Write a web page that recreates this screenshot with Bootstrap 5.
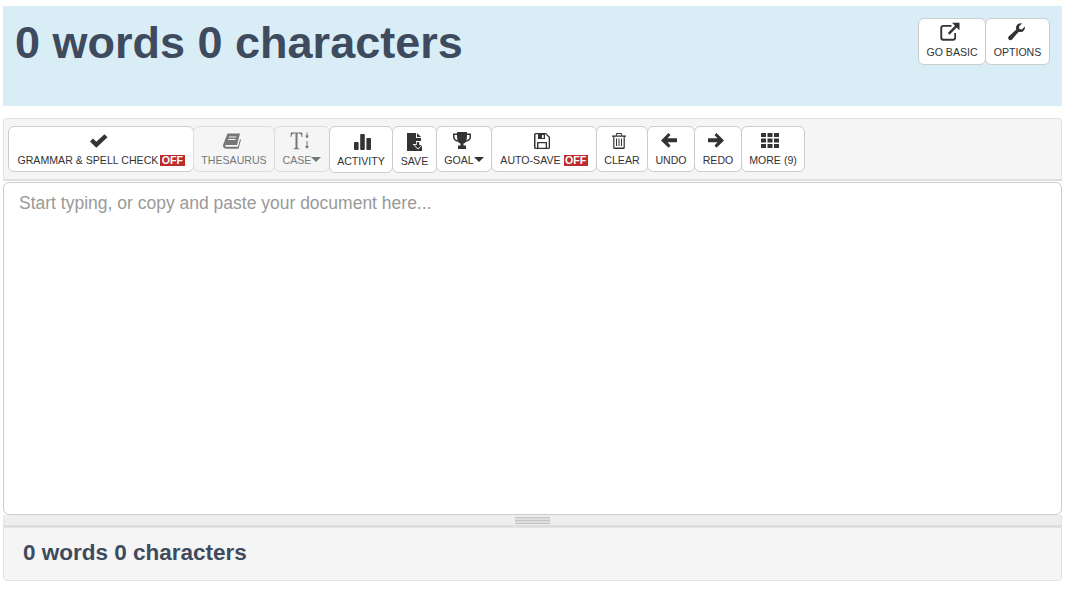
<!DOCTYPE html>
<html lang="en"><head><meta charset="utf-8"><title>Word counter</title>
<link href="https://cdn.jsdelivr.net/npm/bootstrap@5.3.0/dist/css/bootstrap.min.css" rel="stylesheet">
<style>
html,body{height:589px;overflow:hidden;background:#fff;font-family:"Liberation Sans",Arial,sans-serif}
.page-wrap{width:1059px;margin-left:3px;padding-top:6px}
.head-box{height:100px;background:#d9edf7;padding:13px 12px 0 12px}
.head-btns{margin-top:-1px}
.big-count{font-size:45px;line-height:48px;font-weight:700;color:#3e4a5d;margin:0}
.tool-bar{margin-top:12px;height:63px;background:#f5f5f5;border:1px solid #e3e3e3;border-bottom:2px solid #ddd;border-radius:4px 4px 0 0;padding:7px 0 0 4px;align-items:flex-start}
.tb{display:flex;flex-direction:column;align-items:center;justify-content:flex-start;flex:none;height:46px;padding:3px 0 0;background:#fff;border:1px solid #ccc;border-radius:6px;color:#333;font-size:10.6px;line-height:12px;white-space:nowrap;margin-right:-1px}
.tb:hover{background:#fff;color:#333;border-color:#ccc}
.tb .ic{height:24px;padding-bottom:3px;display:flex;align-items:center;justify-content:center}
.tb svg{display:block;fill:#333}
.tb-off{background:#f5f5f5;color:#777;border-color:#ddd}
.tb-off:hover{background:#f5f5f5;color:#777;border-color:#ddd}
.tb-off svg{fill:#777}
.tb-tall{height:47px}
.tb-tall .ic{height:25px;padding-bottom:2px}
.off-tag{display:inline-block;background:#bd2c2c;color:#fff;font-weight:700;padding:0 1.5px;line-height:11px;margin-left:2px;font-size:10.6px}
.caret-d{display:inline-block;width:0;height:0;border-left:5px solid transparent;border-right:5px solid transparent;border-top:5px solid currentColor;vertical-align:2px}
.tw-gram{width:186px}.tw-gram .ic{margin-right:5px}.tw-thes{width:82px}.tw-thes .ic{margin-right:4px}.tw-case{width:56px}.tw-case .ic{margin-right:5px}.tw-act{width:64px}.tw-act .ic{margin-left:2px}.tw-save{width:45px}.tw-goal{width:56px}.tw-goal .ic{margin-right:4px}.tw-autos{width:106px}.tw-autos .ic{margin-right:5px}.tw-clear{width:52px}.tw-clear .ic{margin-right:6px}.tw-undo{width:48px}.tw-undo .ic{margin-right:4px}.tw-redo{width:48px}.tw-redo .ic{margin-right:4px}.tw-more{width:64px}.tw-more .ic{margin-right:6px}.tw-basic{width:68px}.tw-basic .ic{margin-right:4px}.tw-opts{width:65px}.tw-opts .ic{margin-right:4px}
.head-btns .tb{height:47px;padding-top:3px}
.head-btns .ic{height:24px;padding-bottom:5px}
.editor-box{display:block;width:100%;height:333px;border:1px solid #ccc;border-radius:6px;padding:9px 15px;resize:none;outline:0;font-size:17.5px;line-height:22px;background:#fff;color:#333;margin-top:1px}
.editor-box::placeholder{color:#999;opacity:1}
.grip-bar{height:12px;background:#eee;border:1px solid #e3e3e3;border-top:0;border-bottom:2px solid #ddd;display:flex;align-items:center;justify-content:center}
.grip-lines{width:35px;height:7px;border-top:1px solid #c4c4c4;border-bottom:1px solid #c4c4c4;background:linear-gradient(#ddd 0 40%,#c4c4c4 40% 60%,#ddd 60%)}
.foot-box{height:54px;background:#f5f5f5;border:1px solid #e3e3e3;border-radius:0 0 4px 4px;padding:0 19px 2px;display:flex;align-items:center}
.small-count{font-size:22.5px;line-height:26px;font-weight:700;color:#3e4a5d;margin:0}
</style></head><body>
<div class="page-wrap">
 <div class="head-box d-flex justify-content-between align-items-start">
  <h1 class="big-count">0 words 0 characters</h1>
  <div class="head-btns d-flex">
   <button class="btn tb tw-basic"><span class="ic"><svg width="20" height="20" viewBox="0 0 20 20"><path d="M3.500 3h8v1.700h-8A1.300 1.300 0 0 0 2.200 6v9.500a1.300 1.300 0 0 0 1.300 1.300H13a1.300 1.300 0 0 0 1.300-1.300V11H16v4.700a3 3 0 0 1-3 3H3.300a3 3 0 0 1-3-3V6a3 3 0 0 1 3-3z"/><path d="M12 .8h7.500v7.500l-2.800-2.800-7.200 7.200-1.700-1.700 7.200-7.200z"/></svg></span>GO BASIC</button>
   <button class="btn tb tw-opts" style="margin-right:0"><span class="ic"><svg width="20" height="20" viewBox="0 0 20 20"><path d="M18.800 4.500c.4 2.300-.5 4.300-2.500 5.200-1.200.5-2.400.5-3.500 0L6 17.500c-.9 1-2.300 1-3.200.1-.9-.9-.9-2.400.1-3.300l7.400-6.900c-.5-1.200-.4-2.600.4-3.800C11.800 1.800 13.800 1 16 1.500l-3 3 .4 2.500 2.400.5z"/></svg></span>OPTIONS</button>
  </div>
 </div>

 <div class="tool-bar d-flex">
  <button class="btn tb tw-gram"><span class="ic"><svg width="18" height="14" viewBox="0 0 18 14"><path d="M0 7.500 3 4.500l3.300 3.300L14.500.2 17.500 3.200 6.300 13.800z"/></svg></span><span>GRAMMAR &amp; SPELL CHECK<span class="off-tag">OFF</span></span></button>
  <button class="btn tb tb-off tw-thes"><span class="ic"><svg width="18" height="16" viewBox="0 0 18 16"><path d="M4.500.5H17l-3 11.500H3.500c-1 0-1.500.6-1.200 1.200.2.400.7.600 1.200.6H15l2-7.500 1 .5-2.500 9H3.500C1.500 15.800 0 14.500 0 12.800c0-.5.100-1 .3-1.500zM6 3.500l-.3 1h7.500l.3-1zM5.300 6l-.3 1h7.500l.3-1z"/></svg></span>THESAURUS</button>
  <button class="btn tb tb-off tw-case"><span class="ic"><svg width="20" height="20" viewBox="0 0 20 20"><path d="M.8 1.500h11.500l.2 4.500h-.8c-.4-2.300-1-3.400-3.300-3.400H7.500v13.600c0 .9.400 1.100 1.800 1.200v.8H3.700v-.8c1.400-.1 1.800-.3 1.800-1.200V2.600H4.600C2.300 2.600 1.700 3.700 1.300 6H.5z"/><path d="M16.500 1.500h1v3h1.500l-2 3-2-3h1.500zM16.500 10h1v5h1.500l-2 3-2-3h1.500z"/></svg></span><span>CASE<span class="caret-d"></span></span></button>
  <button class="btn tb tb-tall tw-act"><span class="ic"><svg width="17" height="16" viewBox="0 0 17 16"><rect x="0" y="8" width="4.600" height="8" rx="1"/><rect x="6.200" y="0" width="4.600" height="16" rx="1"/><rect x="12.400" y="4" width="4.600" height="12" rx="1"/></svg></span>ACTIVITY</button>
  <button class="btn tb tb-tall tw-save"><span class="ic"><svg width="15" height="18" viewBox="0 0 15 18"><path d="M0 0h9v5h5v3H9v3H5.500l5.500 5.500L15 12.500V18H0z"/><path d="M10 0l4 4h-4z"/><path d="M9.800 9h2.400v3h2.300l-3.500 3.500L7.500 12h2.300z"/></svg></span>SAVE</button>
  <button class="btn tb tw-goal"><span class="ic"><svg width="18" height="17" viewBox="0 0 18 17"><path d="M4 0h10v1.500h4V5c0 2.500-2 4.400-5 4.800-.7.900-1.500 1.500-2.500 1.800v2h2.500V17H5v-3.400h2.500v-2c-1-.3-1.800-.9-2.500-1.800C2 9.400 0 7.500 0 5V1.500h4zM1.500 3v2c0 1.500 1.100 2.700 3 3.200C4.200 6.600 4 4.800 4 3zM14 3c0 1.800-.2 3.600-.5 5.200 1.900-.5 3-1.700 3-3.200V3z"/></svg></span><span>GOAL<span class="caret-d"></span></span></button>
  <button class="btn tb tw-autos"><span class="ic"><svg width="16" height="16" viewBox="0 0 16 16"><path fill-rule="evenodd" d="M1.500 0H12l4 4v10.500a1.500 1.500 0 0 1-1.500 1.500h-13A1.500 1.500 0 0 1 0 14.500v-13A1.500 1.500 0 0 1 1.500 0zM1.500 1.300v13.400H3V9h10v5.700h1.700V4.600L11.500 1.300H11V6H4V1.300zM4.400 10.300v4.400h7.300v-4.400zM8 2v3h1.700V2z"/></svg></span><span>AUTO-SAVE <span class="off-tag" style="margin-left:0">OFF</span></span></button>
  <button class="btn tb tw-clear"><span class="ic"><svg width="14" height="16" viewBox="0 0 14 16"><path fill-rule="evenodd" d="M4.500 0h5l1 2.500H14v1.200h-1.200v10.800A1.500 1.500 0 0 1 11.300 16H2.700a1.500 1.500 0 0 1-1.500-1.500V3.700H0V2.500h3.500zM5.100 1.100l-.4 1.400h4.600l-.4-1.400zM2.400 3.700v10.800h9.200V3.700zM4 5.500h1v7.500H4zM6.500 5.500h1v7.500h-1zM9 5.500h1v7.500H9z"/></svg></span>CLEAR</button>
  <button class="btn tb tw-undo"><span class="ic"><svg width="16" height="15" viewBox="0 0 16 15"><path d="M7.500 0 9.500 2 6.500 5.300H16v4H6.500L9.500 12.600 7.500 14.800 0 7.400z"/></svg></span>UNDO</button>
  <button class="btn tb tw-redo"><span class="ic"><svg width="16" height="15" viewBox="0 0 16 15"><path d="M8.500 0 6.500 2 9.500 5.300H0v4H9.500L6.500 12.600 8.500 14.800 16 7.400z"/></svg></span>REDO</button>
  <button class="btn tb tw-more"><span class="ic"><svg width="18" height="15" viewBox="0 0 18 15"><path d="M0 0h5v4H0zM6.500 0h5v4h-5zM13 0h5v4h-5zM0 5.500h5v4H0zM6.500 5.500h5v4h-5zM13 5.500h5v4h-5zM0 11h5v4H0zM6.500 11h5v4h-5zM13 11h5v4h-5z"/></svg></span>MORE (9)</button>
 </div>

 <textarea class="editor-box" placeholder="Start typing, or copy and paste your document here..."></textarea>
 <div class="grip-bar"><div class="grip-lines"></div></div>
 <div class="foot-box"><h2 class="small-count">0 words 0 characters</h2></div>
</div>
<script src="https://cdn.jsdelivr.net/npm/bootstrap@5.3.0/dist/js/bootstrap.bundle.min.js"></script>
</body></html>
